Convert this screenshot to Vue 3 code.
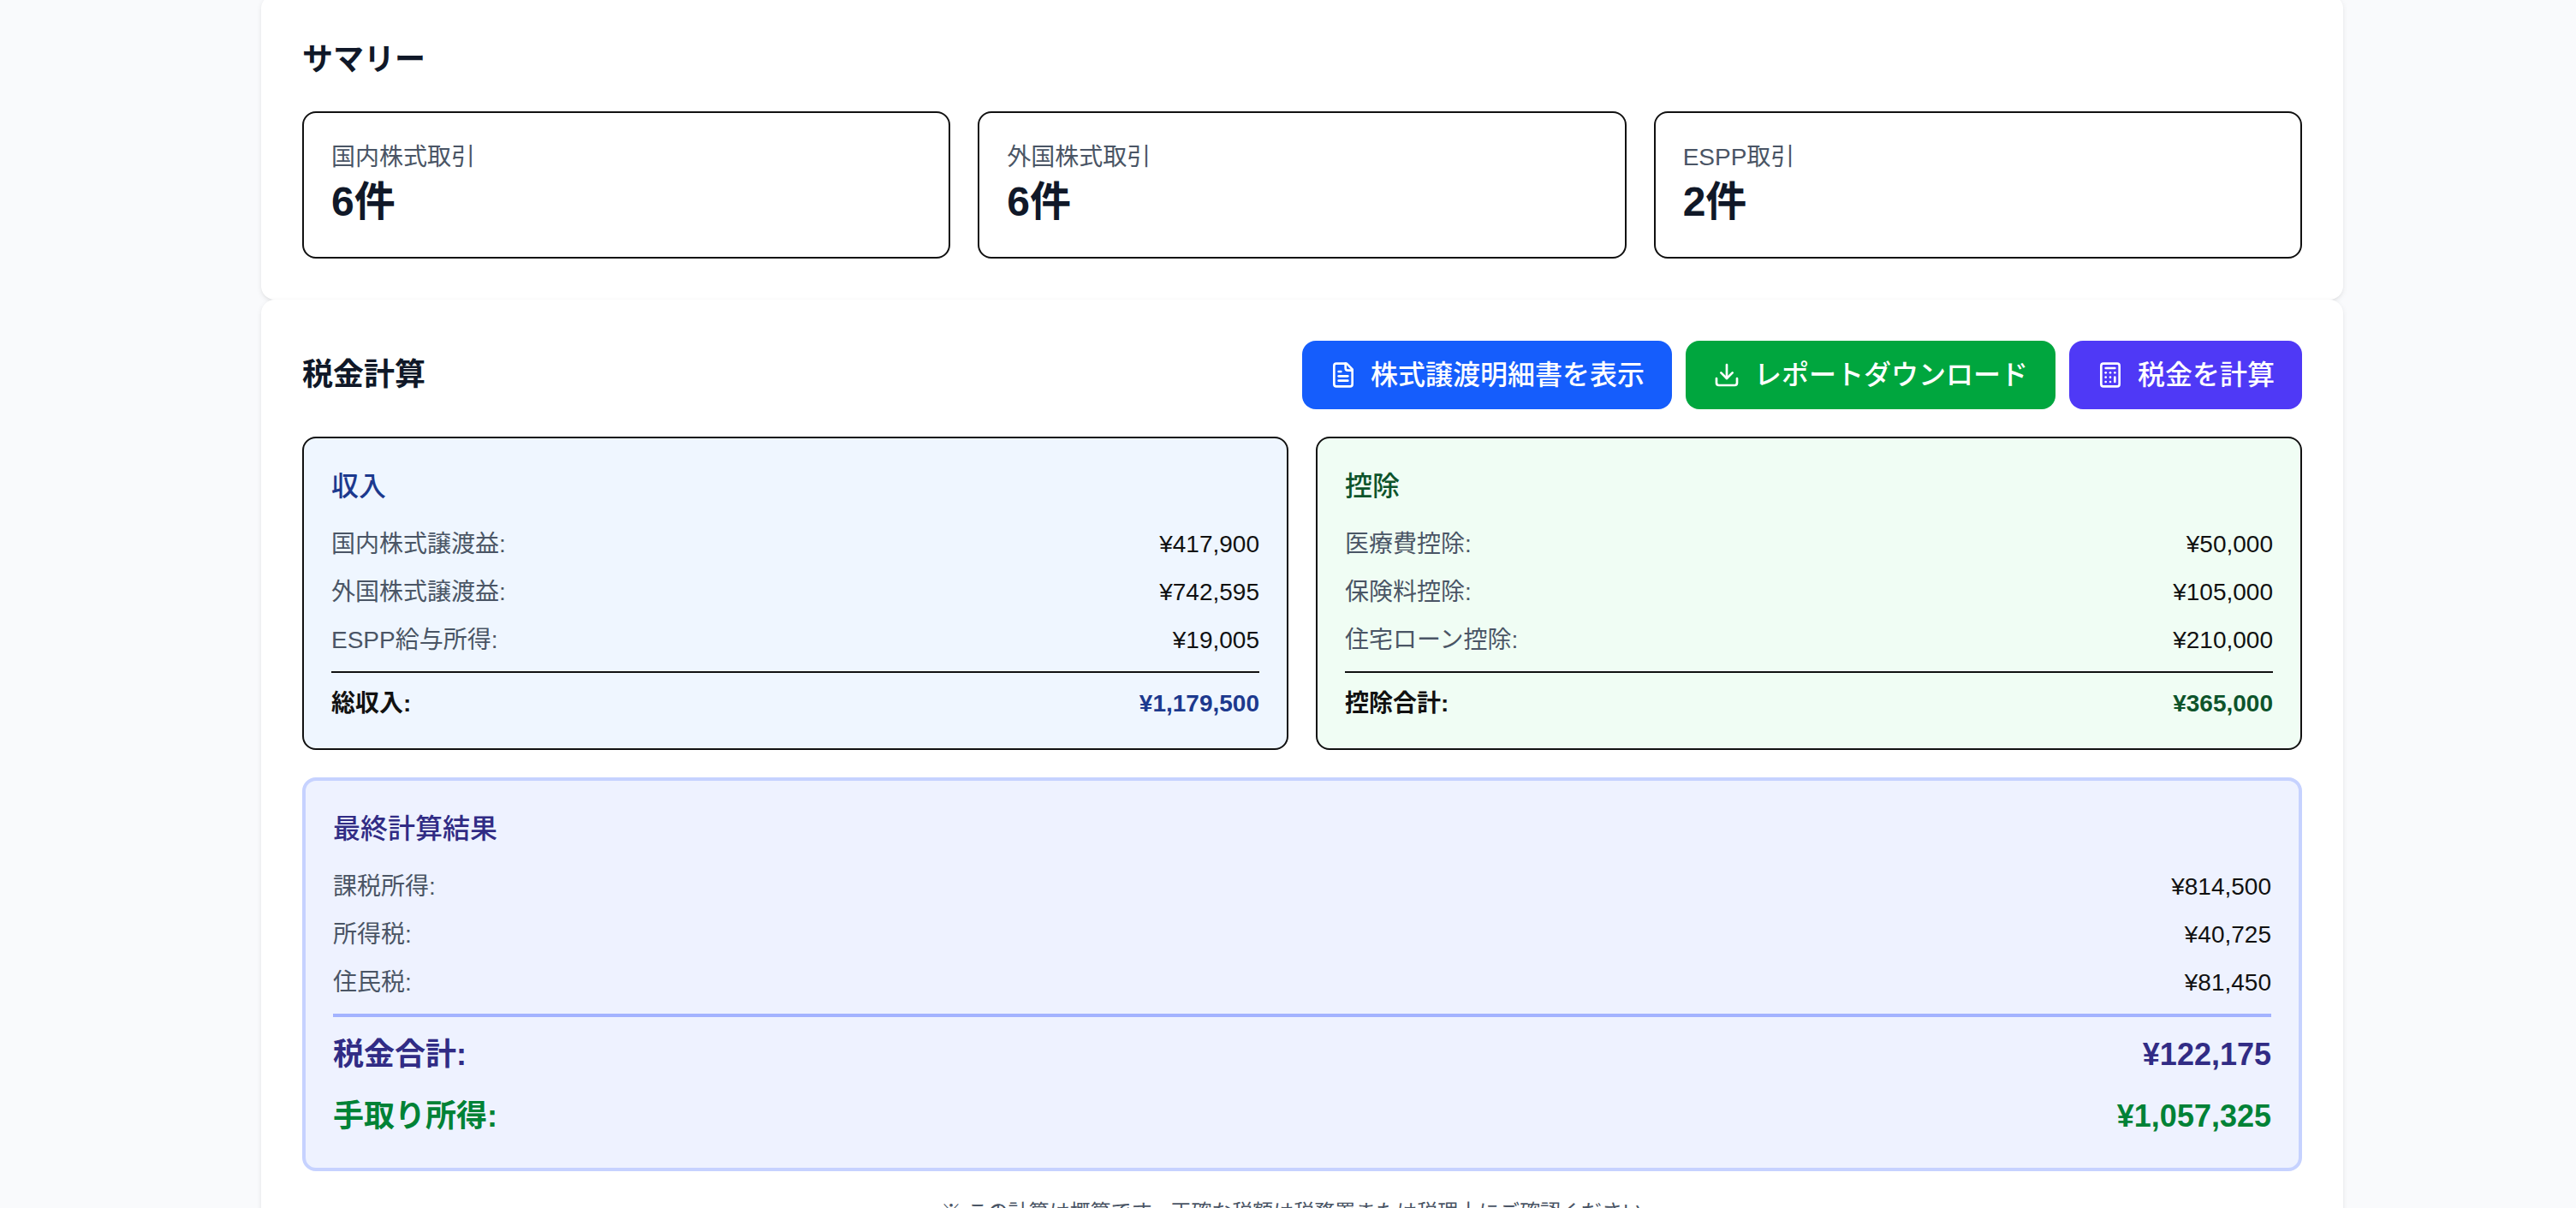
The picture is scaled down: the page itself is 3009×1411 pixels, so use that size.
<script setup>
const summary = [
  { label: '国内株式取引', value: '6件' },
  { label: '外国株式取引', value: '6件' },
  { label: 'ESPP取引', value: '2件' }
]
const income = [
  ['国内株式譲渡益:', '¥417,900'],
  ['外国株式譲渡益:', '¥742,595'],
  ['ESPP給与所得:', '¥19,005']
]
const deduction = [
  ['医療費控除:', '¥50,000'],
  ['保険料控除:', '¥105,000'],
  ['住宅ローン控除:', '¥210,000']
]
const result = [
  ['課税所得:', '¥814,500'],
  ['所得税:', '¥40,725'],
  ['住民税:', '¥81,450']
]
</script>

<template>
  <div class="page">
    <section class="card">
      <h2 class="title summary-title">サマリー</h2>
      <div class="summary-grid">
        <div v-for="s in summary" :key="s.label" class="stat">
          <div class="stat-label">{{ s.label }}</div>
          <div class="stat-value">{{ s.value }}</div>
        </div>
      </div>
    </section>

    <section class="card">
      <div class="head">
        <h2 class="title">税金計算</h2>
        <div class="actions">
          <button class="btn blue">
            <svg class="icon" viewBox="0 0 24 24"><path d="M15 2H6a2 2 0 0 0-2 2v16a2 2 0 0 0 2 2h12a2 2 0 0 0 2-2V7Z"/><path d="M14 2v4a2 2 0 0 0 2 2h4"/><path d="M10 9H8"/><path d="M16 13H8"/><path d="M16 17H8"/></svg>
            株式譲渡明細書を表示
          </button>
          <button class="btn green">
            <svg class="icon" viewBox="0 0 24 24"><path d="M21 15v4a2 2 0 0 1-2 2H5a2 2 0 0 1-2-2v-4"/><polyline points="7 10 12 15 17 10"/><line x1="12" x2="12" y1="15" y2="3"/></svg>
            レポートダウンロード
          </button>
          <button class="btn indigo">
            <svg class="icon" viewBox="0 0 24 24"><rect width="16" height="20" x="4" y="2" rx="2"/><line x1="8" x2="16" y1="6" y2="6"/><line x1="16" x2="16" y1="14" y2="18"/><path d="M16 10h.01"/><path d="M12 10h.01"/><path d="M8 10h.01"/><path d="M12 14h.01"/><path d="M8 14h.01"/><path d="M12 18h.01"/><path d="M8 18h.01"/></svg>
            税金を計算
          </button>
        </div>
      </div>

      <div class="two-col">
        <div class="panel income">
          <h3 class="panel-title">収入</h3>
          <div class="rows">
            <div v-for="r in income" :key="r[0]" class="row">
              <span class="row-label">{{ r[0] }}</span><span class="row-value">{{ r[1] }}</span>
            </div>
          </div>
          <div class="total">
            <span class="total-label">総収入:</span><span class="total-value">¥1,179,500</span>
          </div>
        </div>
        <div class="panel deduct">
          <h3 class="panel-title">控除</h3>
          <div class="rows">
            <div v-for="r in deduction" :key="r[0]" class="row">
              <span class="row-label">{{ r[0] }}</span><span class="row-value">{{ r[1] }}</span>
            </div>
          </div>
          <div class="total">
            <span class="total-label">控除合計:</span><span class="total-value">¥365,000</span>
          </div>
        </div>
      </div>

      <div class="final">
        <h3 class="panel-title">最終計算結果</h3>
        <div class="rows">
          <div v-for="r in result" :key="r[0]" class="row">
            <span class="row-label">{{ r[0] }}</span><span class="row-value">{{ r[1] }}</span>
          </div>
        </div>
        <div class="final-totals">
          <div class="big tax"><span>税金合計:</span><span>¥122,175</span></div>
          <div class="big net"><span>手取り所得:</span><span>¥1,057,325</span></div>
        </div>
      </div>

      <p class="note">※ この計算は概算です。正確な税額は税務署または税理士にご確認ください。</p>
    </section>
  </div>
</template>

<style>
html, body {
  margin: 0;
  height: 100%;
  overflow: hidden;
  background: #f9fafc;
}
</style>

<style scoped>
.page {
  font-family: "Liberation Sans", "Noto Sans CJK JP", sans-serif;
  color: #101828;
  width: 2432px;
  margin: -6px 0 0 305px;
}
.card {
  background: #fff;
  border-radius: 16px;
  padding: 48px;
  box-shadow: 0 2px 6px rgba(0, 0, 0, 0.08), 0 2px 4px -2px rgba(0, 0, 0, 0.08);
}
.title {
  margin: 0;
  font-size: 36px;
  line-height: 56px;
  font-weight: 700;
}
.summary-title {
  margin-bottom: 32px;
}
.summary-grid {
  display: grid;
  grid-template-columns: repeat(3, 1fr);
  gap: 32px;
}
.stat {
  border: 2px solid #111;
  border-radius: 16px;
  padding: 32px;
}
.stat-label {
  font-size: 28px;
  line-height: 40px;
  color: #4a5565;
}
.stat-value {
  font-size: 48px;
  line-height: 64px;
  font-weight: 700;
}
.head {
  display: flex;
  justify-content: space-between;
  align-items: center;
  margin-bottom: 32px;
}
.actions {
  display: flex;
  gap: 16px;
}
.btn {
  display: flex;
  align-items: center;
  gap: 16px;
  height: 80px;
  padding: 0 32px;
  border: 0;
  border-radius: 16px;
  color: #fff;
  font: 500 32px/48px "Liberation Sans", "Noto Sans CJK JP", sans-serif;
}
.blue { background: #155dfc; }
.green { background: #00a63e; }
.indigo { background: #4f39f6; }
.icon {
  width: 32px;
  height: 32px;
  flex: none;
  fill: none;
  stroke: currentColor;
  stroke-width: 2;
  stroke-linecap: round;
  stroke-linejoin: round;
}
.two-col {
  display: grid;
  grid-template-columns: 1fr 1fr;
  gap: 32px;
  margin-bottom: 32px;
}
.panel {
  border: 2px solid #111;
  border-radius: 16px;
  padding: 32px;
}
.income { background: #eff6ff; }
.deduct { background: #f0fdf4; }
.panel-title {
  margin: 0 0 24px;
  font-size: 32px;
  line-height: 48px;
  font-weight: 500;
}
.income .panel-title { color: #1c398e; }
.deduct .panel-title { color: #0d542b; }
.final .panel-title { color: #312c85; }
.rows {
  display: flex;
  flex-direction: column;
  gap: 16px;
}
.row, .total, .big {
  display: flex;
  justify-content: space-between;
}
.row, .total {
  font-size: 28px;
  line-height: 40px;
}
.row-label { color: #4a5565; }
.row-value, .total-label { color: #111; }
.total {
  margin-top: 16px;
  padding-top: 16px;
  border-top: 2px solid #111;
  font-weight: 700;
}
.income .total-value { color: #1c398e; }
.deduct .total-value { color: #0d542b; }
.final {
  background: #eef2ff;
  border: 4px solid #c6d2ff;
  border-radius: 16px;
  padding: 32px;
}
.final-totals {
  margin-top: 16px;
  padding-top: 16px;
  border-top: 4px solid #a3b3ff;
  display: flex;
  flex-direction: column;
  gap: 16px;
}
.big {
  font-size: 36px;
  line-height: 56px;
  font-weight: 700;
}
.tax { color: #312c85; }
.net { color: #008236; }
.note {
  margin: 32px 0 0;
  text-align: center;
  font-size: 24px;
  line-height: 32px;
  color: #4a5565;
}
</style>
